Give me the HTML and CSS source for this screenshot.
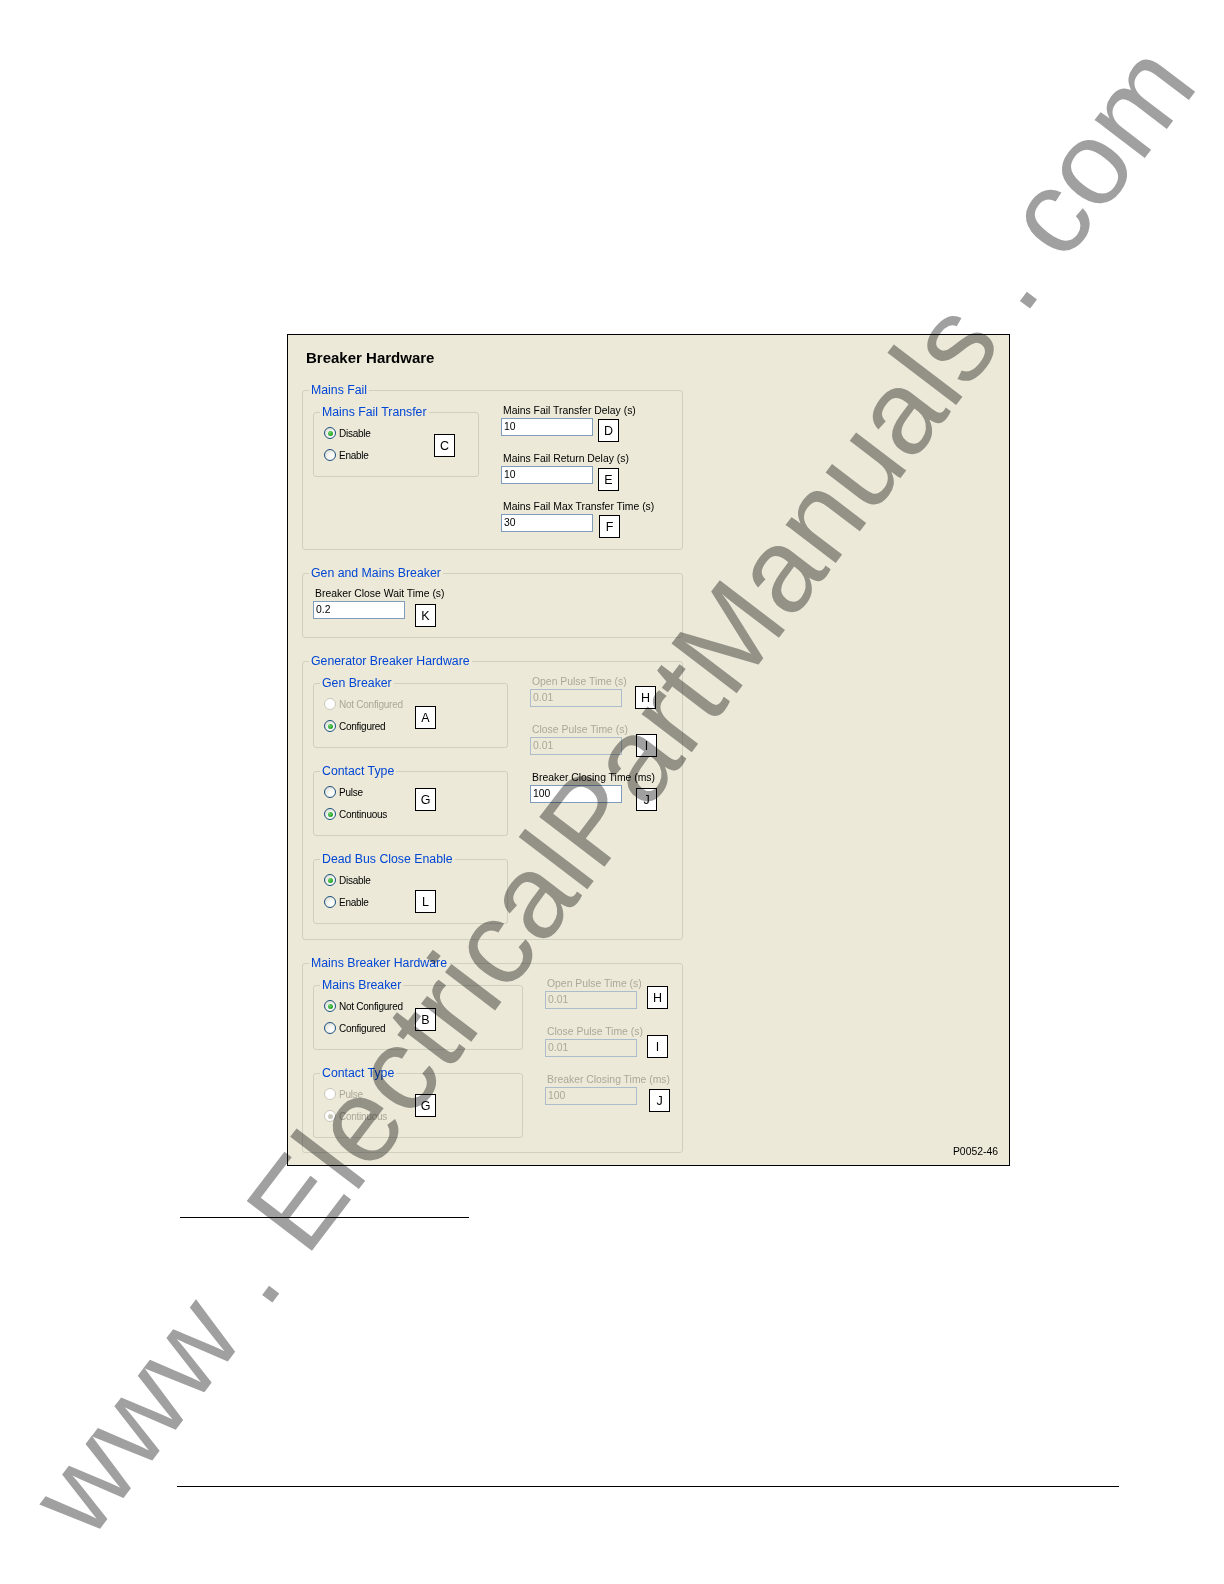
FILE: index.html
```html
<!DOCTYPE html>
<html>
<head>
<meta charset="utf-8">
<title>Breaker Hardware</title>
<link rel="stylesheet" href="styles.css">
</head>
<body>
<div class="page">
  <div class="panel">
    <div class="title">Breaker Hardware</div>

    <fieldset class="grp h-mf">
      <legend>Mains Fail</legend>
      <div class="gbody">
        <div class="lcol w-mf">
          <fieldset class="sub">
            <legend>Mains Fail Transfer</legend>
            <div class="sbody">
              <div class="radios">
                <div class="ropt"><span class="rb on"></span><span>Disable</span></div>
                <div class="ropt"><span class="rb"></span><span>Enable</span></div>
              </div>
              <div class="tag tc">C</div>
            </div>
          </fieldset>
        </div>
        <div class="rcol">
          <div class="field">
            <div class="flabel">Mains Fail Transfer Delay (s)</div>
            <div class="frow"><div class="inp">10</div><div class="tag td">D</div></div>
          </div>
          <div class="field">
            <div class="flabel">Mains Fail Return Delay (s)</div>
            <div class="frow"><div class="inp">10</div><div class="tag te">E</div></div>
          </div>
          <div class="field">
            <div class="flabel">Mains Fail Max Transfer Time (s)</div>
            <div class="frow"><div class="inp">30</div><div class="tag tf">F</div></div>
          </div>
        </div>
      </div>
    </fieldset>

    <fieldset class="grp h-gm gap16">
      <legend>Gen and Mains Breaker</legend>
      <div class="gbody single">
        <div class="field">
          <div class="flabel">Breaker Close Wait Time (s)</div>
          <div class="frow"><div class="inp">0.2</div><div class="tag tk">K</div></div>
        </div>
      </div>
    </fieldset>

    <fieldset class="grp h-gh gap16">
      <legend>Generator Breaker Hardware</legend>
      <div class="gbody">
        <div class="lcol w-gh">
          <fieldset class="sub">
            <legend>Gen Breaker</legend>
            <div class="sbody">
              <div class="radios">
                <div class="ropt dis"><span class="rb"></span><span>Not Configured</span></div>
                <div class="ropt"><span class="rb on"></span><span>Configured</span></div>
              </div>
              <div class="tag ta">A</div>
            </div>
          </fieldset>
          <fieldset class="sub">
            <legend>Contact Type</legend>
            <div class="sbody">
              <div class="radios">
                <div class="ropt"><span class="rb"></span><span>Pulse</span></div>
                <div class="ropt"><span class="rb on"></span><span>Continuous</span></div>
              </div>
              <div class="tag tg1">G</div>
            </div>
          </fieldset>
          <fieldset class="sub">
            <legend>Dead Bus Close Enable</legend>
            <div class="sbody">
              <div class="radios">
                <div class="ropt"><span class="rb on"></span><span>Disable</span></div>
                <div class="ropt"><span class="rb"></span><span>Enable</span></div>
              </div>
              <div class="tag tl">L</div>
            </div>
          </fieldset>
        </div>
        <div class="rcol">
          <div class="field">
            <div class="flabel dis">Open Pulse Time (s)</div>
            <div class="frow"><div class="inp dis">0.01</div><div class="tag th1">H</div></div>
          </div>
          <div class="field">
            <div class="flabel dis">Close Pulse Time (s)</div>
            <div class="frow"><div class="inp dis">0.01</div><div class="tag ti1">I</div></div>
          </div>
          <div class="field">
            <div class="flabel">Breaker Closing Time (ms)</div>
            <div class="frow"><div class="inp">100</div><div class="tag tj1">J</div></div>
          </div>
        </div>
      </div>
    </fieldset>

    <div class="lastrow gap16">
      <fieldset class="grp h-mh">
        <legend>Mains Breaker Hardware</legend>
        <div class="gbody">
          <div class="lcol w-mh">
            <fieldset class="sub">
              <legend>Mains Breaker</legend>
              <div class="sbody">
                <div class="radios">
                  <div class="ropt"><span class="rb on"></span><span>Not Configured</span></div>
                  <div class="ropt"><span class="rb"></span><span>Configured</span></div>
                </div>
                <div class="tag tb">B</div>
              </div>
            </fieldset>
            <fieldset class="sub">
              <legend>Contact Type</legend>
              <div class="sbody">
                <div class="radios">
                  <div class="ropt dis"><span class="rb"></span><span>Pulse</span></div>
                  <div class="ropt dis"><span class="rb on"></span><span>Continuous</span></div>
                </div>
                <div class="tag tg2">G</div>
              </div>
            </fieldset>
          </div>
          <div class="rcol">
            <div class="field">
              <div class="flabel dis">Open Pulse Time (s)</div>
              <div class="frow"><div class="inp dis">0.01</div><div class="tag th2">H</div></div>
            </div>
            <div class="field">
              <div class="flabel dis">Close Pulse Time (s)</div>
              <div class="frow"><div class="inp dis">0.01</div><div class="tag ti2">I</div></div>
            </div>
            <div class="field">
              <div class="flabel dis">Breaker Closing Time (ms)</div>
              <div class="frow"><div class="inp dis">100</div><div class="tag tj2">J</div></div>
            </div>
          </div>
        </div>
      </fieldset>
      <div class="figid">P0052-46</div>
    </div>
  </div>

  <div class="rule1"></div>
  <div class="rule2"></div>

  <svg class="wm" width="1224" height="1584" viewBox="0 0 1224 1584">
    <text x="89.6" y="1542.6" transform="rotate(-52.7 89.6 1542.6)">www .</text>
    <text x="305.9" y="1258.6" transform="rotate(-52.7 305.9 1258.6)">Electrical</text>
    <text x="598.5" y="874.6" transform="rotate(-52.7 598.5 874.6)">Part</text>
    <text x="730.7" y="701" transform="rotate(-52.7 730.7 701)">Manuals</text>
    <text class="tail" x="1113.9" y="20.3" text-anchor="end" transform="rotate(-52.7 1113.9 20.3)">. com</text>
  </svg>
</div>
</body>
</html>
```

FILE: styles.css
```css
* { box-sizing: border-box; }

html { overflow: hidden; }

body {
  margin: 0;
  background: #fff;
  font-family: "Liberation Sans", Arial, sans-serif;
  color: #000;
}

.page {
  position: relative;
  width: 1224px;
  height: 1584px;
  padding-top: 334px;
}

.panel {
  margin-left: 287px;
  width: 723px;
  height: 832px;
  border: 1px solid #000;
  background: #ece9d8;
  padding: 14px 0 0 14px;
  display: flex;
  flex-direction: column;
}

.title {
  font-weight: bold;
  font-size: 15px;
  line-height: 18px;
  margin-left: 4px;
  margin-bottom: 16px;
}

fieldset {
  margin: 0;
  padding: 0;
  min-width: 0;
  border: 1px solid #d0d0bf;
  border-radius: 3px;
}

legend {
  padding: 0 2px;
  margin-left: 6px;
  font-size: 12.3px;
  line-height: 15px;
  color: #0046d5;
  white-space: nowrap;
}

.grp { width: 381px; flex: none; }
.h-mf { height: 167px; }
.h-gm { height: 72px; }
.h-gh { height: 286px; }
.h-mh { height: 197px; }
.gap16 { margin-top: 16px; }

.gbody {
  display: flex;
  padding: 7px 10px 0 10px;
}
.gbody.single { display: block; }

.lcol {
  display: flex;
  flex-direction: column;
  gap: 16px;
  flex: none;
}
.w-mf { width: 166px; }
.w-gh { width: 195px; }
.w-mh { width: 210px; }

.sub { height: 72px; }

.sbody {
  display: flex;
  align-items: flex-start;
  padding: 2px 0 0 10px;
}

.radios {
  width: 91px;
  flex: none;
  display: flex;
  flex-direction: column;
}

.ropt {
  height: 22px;
  display: flex;
  align-items: center;
  font-size: 10px;
  letter-spacing: -0.25px;
  white-space: nowrap;
}
.ropt.dis { color: #aca899; }

.rb {
  width: 12px;
  height: 12px;
  flex: none;
  margin-right: 3px;
  border-radius: 50%;
  border: 1px solid #1c5180;
  background: radial-gradient(circle at 70% 70%, #ffffff 0%, #f3f3ef 45%, #d4d3c8 100%);
  display: flex;
  align-items: center;
  justify-content: center;
}
.rb.on::after {
  content: "";
  width: 5px;
  height: 5px;
  border-radius: 50%;
  background: radial-gradient(circle at 35% 35%, #6fd46f 0%, #21a121 70%);
}
.ropt.dis .rb {
  border-color: #cac8bb;
  background: #fff;
}
.ropt.dis .rb.on::after { background: #cac8bb; }

.rcol {
  margin-left: 22px;
  display: flex;
  flex-direction: column;
  gap: 17px;
}

.flabel {
  font-size: 10.4px;
  line-height: 12px;
  padding: 0 0 1px 2px;
  white-space: nowrap;
}
.flabel.dis { color: #aca899; }

.frow {
  display: flex;
  align-items: flex-start;
  height: 18px;
}

.inp {
  width: 92px;
  height: 18px;
  flex: none;
  border: 1px solid #7f9db9;
  background: #fff;
  font-size: 10.4px;
  line-height: 16px;
  padding-left: 2px;
}
.inp.dis {
  background: #ece9d8;
  border-color: #adbccb;
  color: #aca899;
}

.tag {
  width: 21px;
  height: 23px;
  flex: none;
  border: 1px solid #000;
  background: #fff;
  font-size: 12.5px;
  display: flex;
  align-items: center;
  justify-content: center;
}

/* annotation tag offsets */
.tc { margin: 12px 0 0 19px; }
.ta { margin-top: 13px; }
.tg1 { margin-top: 7px; }
.tl { margin-top: 21px; }
.tb { margin-top: 13px; }
.tg2 { margin-top: 11px; }

.td { margin: 1px 0 0 5px; }
.te { margin: 2px 0 0 5px; }
.tf { margin: 1px 0 0 6px; }
.tk { margin: 3px 0 0 10px; }
.th1 { margin: -3px 0 0 13px; }
.ti1 { margin: -3px 0 0 14px; }
.tj1 { margin: 3px 0 0 14px; }
.th2 { margin: -5px 0 0 10px; }
.ti2 { margin: -4px 0 0 10px; }
.tj2 { margin: 2px 0 0 12px; }

.lastrow {
  display: flex;
  align-items: flex-end;
}

.figid {
  margin-left: auto;
  margin-right: 11px;
  margin-bottom: -5px;
  font-size: 10.4px;
  line-height: 12px;
}

.rule1 {
  margin: 51px 0 0 180px;
  width: 289px;
  height: 1px;
  background: #000;
}

.rule2 {
  margin: 268px 0 0 177px;
  width: 942px;
  height: 1px;
  background: #000;
}

.wm {
  position: absolute;
  left: 0;
  top: 0;
  mix-blend-mode: multiply;
  pointer-events: none;
}
.wm text {
  font-family: "Liberation Sans", Arial, sans-serif;
  font-size: 119px;
  fill: #a0a0a0;
  white-space: pre;
}
.wm text.tail {
  dominant-baseline: text-before-edge;
}
```
